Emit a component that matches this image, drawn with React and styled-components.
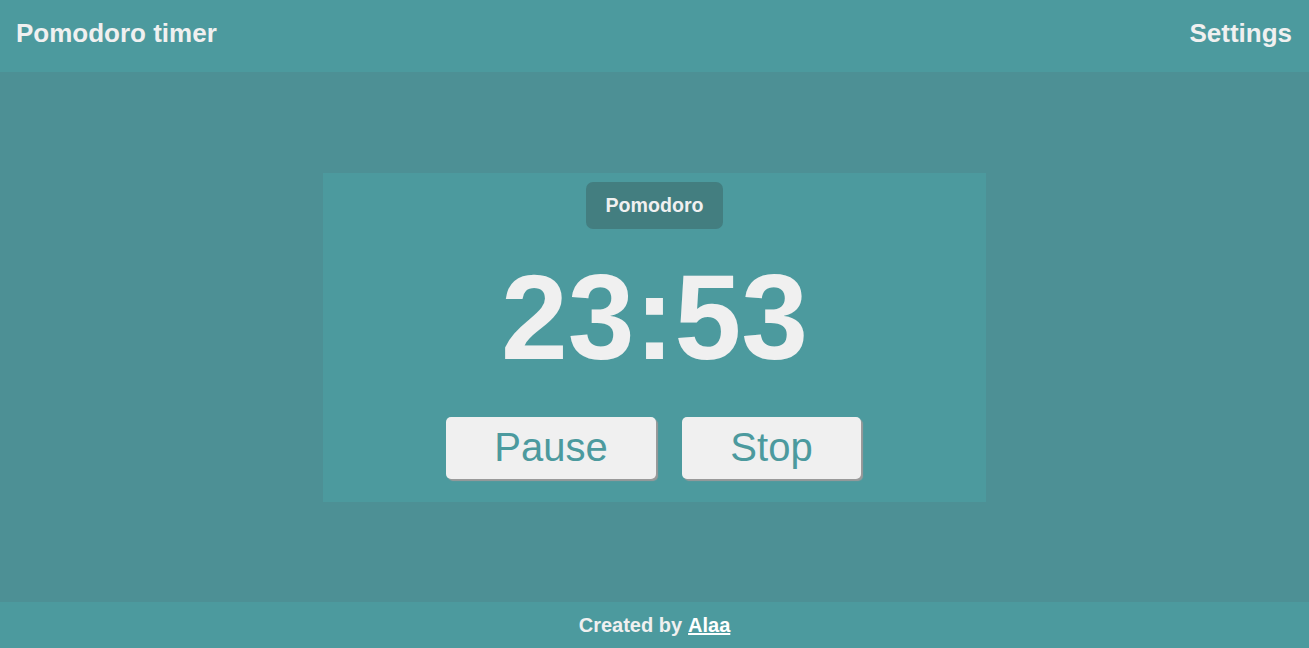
import React from 'react';
import styled, { createGlobalStyle } from 'styled-components';

const GlobalStyle = createGlobalStyle`
  body {
    margin: 0;
    font-family: "Liberation Sans", Arial, sans-serif;
    background: #4d9095;
    color: #f0f0f0;
  }
`;

const Page = styled.div`
  display: flex;
  flex-direction: column;
  height: 100vh;
`;

const Header = styled.header`
  height: 72px;
  box-sizing: border-box;
  display: flex;
  justify-content: space-between;
  align-items: flex-start;
  padding: 18px 17px 0 16px;
  background: #4c9a9e;
  font-size: 26px;
  font-weight: bold;
`;

const Main = styled.main`
  flex: 1;
  display: flex;
  align-items: center;
  justify-content: center;
`;

const Card = styled.section`
  width: 663px;
  height: 329px;
  box-sizing: border-box;
  padding-top: 9px;
  background: #4c9a9e;
  display: flex;
  flex-direction: column;
  align-items: center;
`;

const Badge = styled.div`
  padding: 12px 20px;
  background: #437e80;
  border-radius: 7px;
  font-size: 19.6px;
  font-weight: bold;
  line-height: 23px;
`;

const Time = styled.div`
  margin-top: 19px;
  font-size: 120px;
  font-weight: bold;
  line-height: 139px;
`;

const Controls = styled.div`
  margin-top: 30px;
  margin-right: 2px;
  display: flex;
  gap: 26px;
`;

const Button = styled.button`
  height: 62px;
  width: ${p => p.width}px;
  border: none;
  border-radius: 5px;
  background: #f0f0f0;
  color: #4c9a9e;
  font-family: "Liberation Sans", Arial, sans-serif;
  font-size: 40px;
  box-shadow: 2px 2px 1px #9a9a9a;
  cursor: pointer;
`;

const Footer = styled.footer`
  height: 46px;
  display: flex;
  align-items: center;
  justify-content: center;
  background: #4c9a9e;
  font-size: 20px;
  font-weight: bold;

  a {
    color: #ffffff;
    margin-left: 6px;
  }
`;

export default function App() {
  return (
    <Page>
      <GlobalStyle />
      <Header>
        <span>Pomodoro timer</span>
        <span>Settings</span>
      </Header>
      <Main>
        <Card>
          <Badge>Pomodoro</Badge>
          <Time>23:53</Time>
          <Controls>
            <Button width={210}>Pause</Button>
            <Button width={179}>Stop</Button>
          </Controls>
        </Card>
      </Main>
      <Footer>
        Created by<a href="#">Alaa</a>
      </Footer>
    </Page>
  );
}
